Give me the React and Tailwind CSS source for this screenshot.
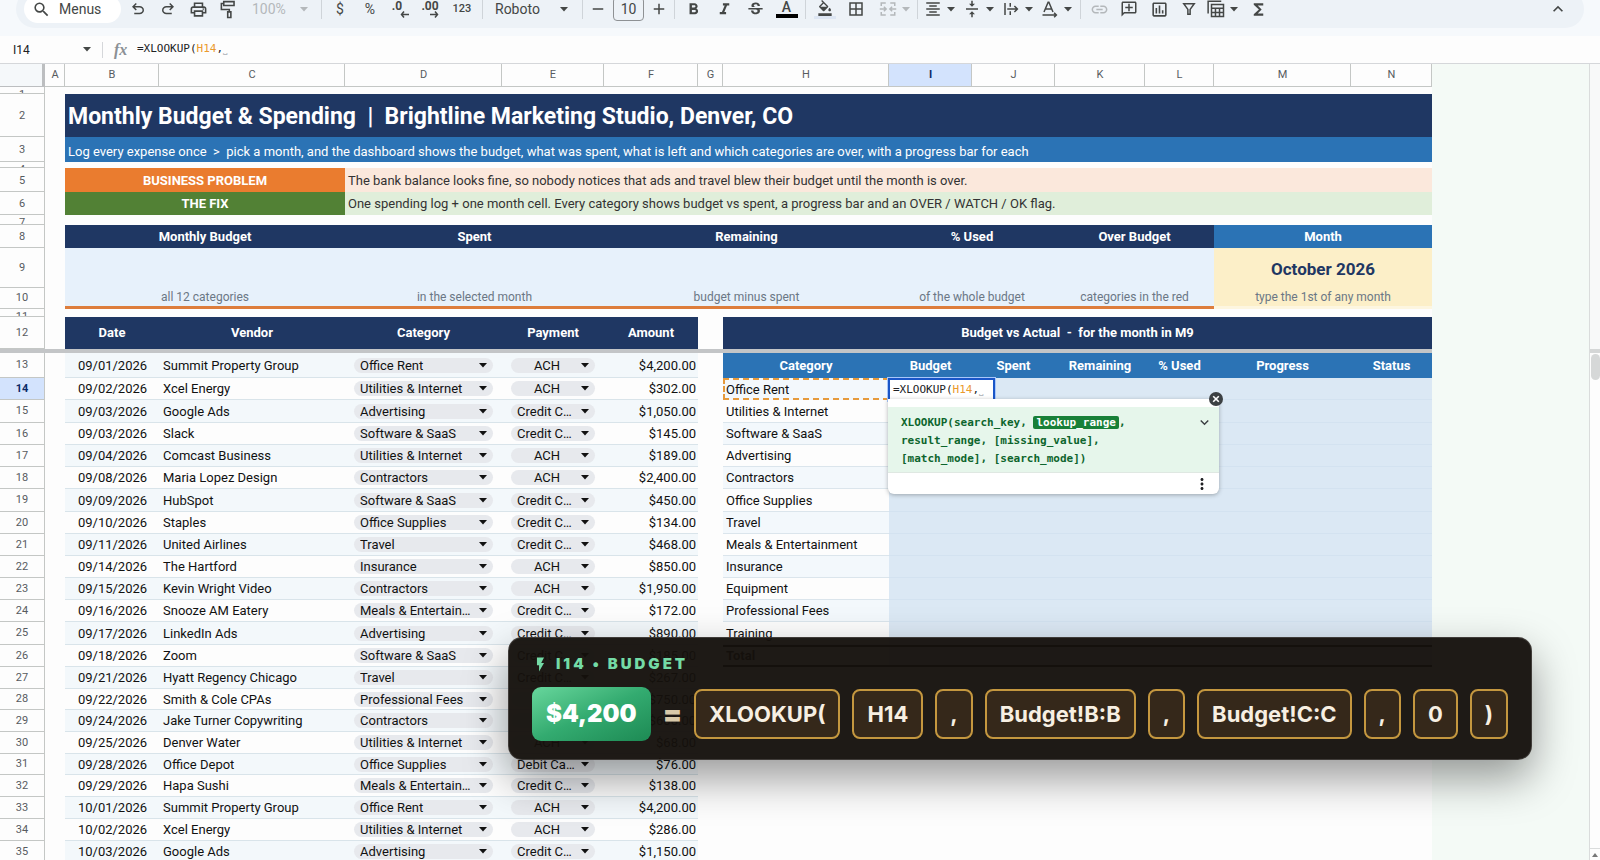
import {
  MdBorderAll,
  MdFlashOn,
  MdFormatAlignCenter,
  MdFormatBold,
  MdFormatColorFill,
  MdFormatItalic,
  MdFunctions,
  MdKeyboardArrowDown,
  MdKeyboardArrowUp,
  MdLink,
  MdMoreVert,
  MdOutlineAddComment,
  MdOutlineInsertChart,
  MdOutlinePrint,
  MdSearch,
  MdStrikethroughS,
  MdVerticalAlignCenter,
} from 'react-icons/md'

const columns = [
  { id: 'A', width: 'w-5' },
  { id: 'B', width: 'w-[94px]' },
  { id: 'C', width: 'w-[186px]' },
  { id: 'D', width: 'w-[157px]' },
  { id: 'E', width: 'w-[102px]' },
  { id: 'F', width: 'w-[94px]' },
  { id: 'G', width: 'w-[25px]' },
  { id: 'H', width: 'w-[166px]' },
  { id: 'I', width: 'w-[83px]' },
  { id: 'J', width: 'w-[83px]' },
  { id: 'K', width: 'w-[90px]' },
  { id: 'L', width: 'w-[69px]' },
  { id: 'M', width: 'w-[137px]' },
  { id: 'N', width: 'w-[81px]' },
]

const expenses = [
  ['09/01/2026', 'Summit Property Group', 'Office Rent', 'ACH', '$4,200.00'],
  ['09/02/2026', 'Xcel Energy', 'Utilities & Internet', 'ACH', '$302.00'],
  ['09/03/2026', 'Google Ads', 'Advertising', 'Credit Card', '$1,050.00'],
  ['09/03/2026', 'Slack', 'Software & SaaS', 'Credit Card', '$145.00'],
  ['09/04/2026', 'Comcast Business', 'Utilities & Internet', 'ACH', '$189.00'],
  ['09/08/2026', 'Maria Lopez Design', 'Contractors', 'ACH', '$2,400.00'],
  ['09/09/2026', 'HubSpot', 'Software & SaaS', 'Credit Card', '$450.00'],
  ['09/10/2026', 'Staples', 'Office Supplies', 'Credit Card', '$134.00'],
  ['09/11/2026', 'United Airlines', 'Travel', 'Credit Card', '$468.00'],
  ['09/14/2026', 'The Hartford', 'Insurance', 'ACH', '$850.00'],
  ['09/15/2026', 'Kevin Wright Video', 'Contractors', 'ACH', '$1,950.00'],
  ['09/16/2026', 'Snooze AM Eatery', 'Meals & Entertainment', 'Credit Card', '$172.00'],
  ['09/17/2026', 'LinkedIn Ads', 'Advertising', 'Credit Card', '$890.00'],
  ['09/18/2026', 'Zoom', 'Software & SaaS', 'Credit Card', '$185.00'],
  ['09/21/2026', 'Hyatt Regency Chicago', 'Travel', 'Credit Card', '$267.00'],
  ['09/22/2026', 'Smith & Cole CPAs', 'Professional Fees', 'ACH', '$750.00'],
  ['09/24/2026', 'Jake Turner Copywriting', 'Contractors', 'ACH', '$600.00'],
  ['09/25/2026', 'Denver Water', 'Utilities & Internet', 'ACH', '$68.00'],
  ['09/28/2026', 'Office Depot', 'Office Supplies', 'Debit Card', '$76.00'],
  ['09/29/2026', 'Hapa Sushi', 'Meals & Entertainment', 'Credit Card', '$138.00'],
  ['10/01/2026', 'Summit Property Group', 'Office Rent', 'ACH', '$4,200.00'],
  ['10/02/2026', 'Xcel Energy', 'Utilities & Internet', 'ACH', '$286.00'],
  ['10/03/2026', 'Google Ads', 'Advertising', 'Credit Card', '$1,150.00'],
]

// rows that were resized by hand, the rest are h-[22px]
const rowHeights = {
  13: 'h-[25px]',
  15: 'h-[23px]',
  19: 'h-[23px]',
  25: 'h-[23px]',
  28: 'h-[21px]',
  31: 'h-[21px]',
}

const categories = [
  'Office Rent',
  'Utilities & Internet',
  'Software & SaaS',
  'Advertising',
  'Contractors',
  'Office Supplies',
  'Travel',
  'Meals & Entertainment',
  'Insurance',
  'Equipment',
  'Professional Fees',
  'Training',
]

const payments = ['ACH', 'Credit Card', 'Debit Card']

const kpis = [
  { label: 'Monthly Budget', note: 'all 12 categories', span: 2 },
  { label: 'Spent', note: 'in the selected month', span: 2 },
  { label: 'Remaining', note: 'budget minus spent', span: 3 },
  { label: '% Used', note: 'of the whole budget', span: 2 },
  { label: 'Over Budget', note: 'categories in the red', span: 2 },
]

const tokens = ['XLOOKUP(', 'H14', ',', 'Budget!B:B', ',', 'Budget!C:C', ',', '0', ')']

function Caret({ className = '' }) {
  return (
    <svg viewBox="0 0 8 5" className={`h-[5px] w-2 shrink-0 fill-current ${className}`} aria-hidden="true">
      <path d="M0 0h8L4 4.6z" />
    </svg>
  )
}

function Icon({ children, viewBox = '0 0 24 24' }) {
  return (
    <svg viewBox={viewBox} className="size-[18px] shrink-0 fill-current" aria-hidden="true">
      {children}
    </svg>
  )
}

function Separator() {
  return <span className="mx-[3px] h-5 w-px shrink-0 bg-[#cfd4d9]" />
}

function Tool({ label, width = 'w-[30px]', className = '', children }) {
  return (
    <button
      type="button"
      aria-label={label}
      className={`flex h-7 shrink-0 items-center justify-center ${width} ${className}`}
    >
      {children}
    </button>
  )
}

function DropTool({ label, className = 'w-[39px] pl-[3px]', children }) {
  return (
    <button type="button" aria-label={label} className={`flex h-7 shrink-0 items-center gap-[5px] ${className}`}>
      {children}
      <Caret />
    </button>
  )
}

function Toolbar() {
  return (
    <header className="h-9 shrink-0 overflow-hidden bg-[#f6f9fc]">
      <div className="mx-4 -mt-2.5 flex h-[38px] items-center rounded-full bg-[#edf2f7] pl-2 text-[#444746]">
        <button
          type="button"
          className="mr-[2px] flex h-7 w-[97px] shrink-0 items-center gap-2 rounded-full bg-white pl-2 text-sm"
        >
          <MdSearch size={19} />
          Menus
        </button>
        <Tool label="Undo">
          <Icon viewBox="0 -960 960 960">
            <path d="M280-200v-80h284q63 0 109.500-40T720-420q0-60-46.500-100T564-560H312l104 104-56 56-200-200 200-200 56 56-104 104h252q97 0 166.500 63T800-420q0 94-69.500 157T564-200H280Z" />
          </Icon>
        </Tool>
        <Tool label="Redo">
          <Icon viewBox="0 -960 960 960">
            <path d="M396-200q-97 0-166.500-63T160-420q0-94 69.500-157T396-640h252L544-744l56-56 200 200-200 200-56-56 104-104H396q-63 0-109.500 40T240-420q0 60 46.500 100T396-280h284v80H396Z" />
          </Icon>
        </Tool>
        <Tool label="Print">
          <MdOutlinePrint size={19} />
        </Tool>
        <Tool label="Paint format">
          <svg viewBox="0 0 24 24" className="size-[19px] fill-none stroke-current stroke-2" aria-hidden="true">
            <path d="M6 2h13v5H6zM6 4.500H3V12h10v3M11 15h4v7h-4z" />
          </svg>
        </Tool>
        <button
          type="button"
          aria-label="Zoom"
          className="flex h-7 w-[75px] shrink-0 items-center justify-between pr-2.5 pl-[9px] text-sm text-[#b4b8bb]"
        >
          100%
          <Caret />
        </button>
        <Separator />
        <Tool label="Format as currency" className="text-sm">$</Tool>
        <Tool label="Format as percent" className="text-sm">%</Tool>
        <Tool label="Decrease decimal places" className="flex-col text-[12px] font-bold">
          <span className="mr-1.5 leading-[10px]">.0</span>
          <svg viewBox="0 0 10 7" className="ml-2.5 h-[7px] w-2.5 fill-none stroke-current stroke-[1.5]" aria-hidden="true">
            <path d="M4 .5 1.500 3.500 4 6.500M1.500 3.500H9" />
          </svg>
        </Tool>
        <Tool label="Increase decimal places" className="flex-col text-[12px] font-bold">
          <span className="leading-[10px]">.00</span>
          <svg viewBox="0 0 10 7" className="ml-2 h-[7px] w-2.5 fill-none stroke-current stroke-[1.5]" aria-hidden="true">
            <path d="M6 .5 8.500 3.500 6 6.500M8.500 3.500H1" />
          </svg>
        </Tool>
        <Tool label="More formats" width="w-[34px]" className="text-[11px] font-medium">123</Tool>
        <Separator />
        <button
          type="button"
          aria-label="Font"
          className="flex h-7 w-[93px] shrink-0 items-center justify-between pr-[11px] pl-[9px] text-sm"
        >
          Roboto
          <Caret />
        </button>
        <Separator />
        <Tool label="Decrease font size" width="w-6">
          <Icon><path d="M5 11h14v2H5z" /></Icon>
        </Tool>
        <input
          aria-label="Font size"
          defaultValue="10"
          className="mx-[3px] h-6 w-[31px] shrink-0 rounded-[4px] border border-[#8e9194] text-center text-sm"
        />
        <Tool label="Increase font size" width="w-6">
          <Icon><path d="M19 13h-6v6h-2v-6H5v-2h6V5h2v6h6z" /></Icon>
        </Tool>
        <Separator />
        <Tool label="Bold" width="w-[31px]"><MdFormatBold size={19} /></Tool>
        <Tool label="Italic" width="w-[31px]"><MdFormatItalic size={19} /></Tool>
        <Tool label="Strikethrough" width="w-[31px]"><MdStrikethroughS size={19} /></Tool>
        <Tool label="Text color" width="w-[31px]" className="flex-col">
          <span className="text-sm leading-[14px] font-medium">A</span>
          <span className="h-1 w-[22px] bg-black" />
        </Tool>
        <Separator />
        <Tool label="Fill color" width="w-[31px]" className="flex-col">
          <MdFormatColorFill size={16} />
          <span className="h-[3px] w-[22px] bg-[#dde6f3]" />
        </Tool>
        <Tool label="Borders" width="w-[31px]"><MdBorderAll size={18} /></Tool>
        <DropTool label="Merge cells" className="w-[43px] pl-2 text-[#b4b8bb]">
          <svg viewBox="0 0 24 24" className="size-[18px] fill-none stroke-current stroke-2" aria-hidden="true">
            <path d="M9 4H3v4M15 4h6v4M3 16v4h6M21 16v4h-6M1 12h8M6.500 9l3 3-3 3M23 12h-8M17.500 9l-3 3 3 3" />
          </svg>
        </DropTool>
        <Separator />
        <DropTool label="Horizontal align"><MdFormatAlignCenter size={18} /></DropTool>
        <DropTool label="Vertical align"><MdVerticalAlignCenter size={18} /></DropTool>
        <DropTool label="Text wrapping">
          <svg viewBox="0 0 24 24" className="size-[18px] fill-none stroke-current stroke-2" aria-hidden="true">
            <path d="M4 4v16M11 4v5M11 15v5M7 12h13M16.500 8l4 4-4 4" />
          </svg>
        </DropTool>
        <DropTool label="Text rotation">
          <svg viewBox="0 0 24 24" className="size-[18px] fill-none stroke-current stroke-2" aria-hidden="true">
            <path d="M4 16 9.500 3h1L16 16M6 12h8M2 20h18M17.500 17l3 3-3 3" />
          </svg>
        </DropTool>
        <Separator />
        <Tool label="Insert link" className="text-[#b4b8bb]"><MdLink size={19} /></Tool>
        <Tool label="Insert comment"><MdOutlineAddComment size={18} className="-scale-x-100" /></Tool>
        <Tool label="Insert chart"><MdOutlineInsertChart size={19} /></Tool>
        <Tool label="Create a filter">
          <svg viewBox="0 0 24 24" className="size-[18px] fill-none stroke-current stroke-2" aria-hidden="true">
            <path d="M5 5h14l-5.500 7.500V19h-3v-6.500z" />
          </svg>
        </Tool>
        <DropTool label="Table views">
          <svg viewBox="0 0 24 24" className="size-[18px] fill-none stroke-current stroke-2" aria-hidden="true">
            <path d="M1.500 18V1.500H19M6 6h16v16H6zM6 11h16M6 16.500h16M11.300 11v11M16.700 11v11" />
          </svg>
        </DropTool>
        <Tool label="Functions"><MdFunctions size={19} /></Tool>
        <Tool label="Hide the menus" className="mr-[11px] ml-auto"><MdKeyboardArrowUp size={20} /></Tool>
      </div>
    </header>
  )
}

function Formula() {
  return (
    <span className="font-['DejaVu_Sans_Mono',monospace] text-[11px] whitespace-pre text-[#202124]">
      =XLOOKUP(<span className="text-[#ea9a2e]">H14</span>,<span className="text-[#b8bcc2]">⎵</span>
    </span>
  )
}

function FormulaBar() {
  return (
    <div className="flex h-7 shrink-0 items-center border-b border-[#d5d7da] bg-[#fdfdfd]">
      <input aria-label="Name box" defaultValue="I14" className="w-16 shrink-0 bg-transparent pl-[13px] text-[12px] text-[#202124]" />
      <button type="button" aria-label="Named ranges" className="ml-[17px] flex h-5 w-[11px] items-center justify-center text-[#444746]">
        <Caret />
      </button>
      <span className="mr-[11px] ml-2.5 h-4 w-px bg-[#d5d7da]" />
      <span className="mr-[7px] w-4 font-['Liberation_Serif',serif] text-base leading-5 font-bold text-[#8b9095] italic">fx</span>
      <Formula />
    </div>
  )
}

function RowLabel({ n, height, active, clipped }) {
  return (
    <th
      scope="row"
      className={`border-r border-b border-[#c4c7c5] p-0 text-[11px] ${
        active ? 'bg-[#d3e3fd] font-bold text-[#0b2a66]' : 'bg-[#fdfdfd] font-normal text-[#575b5f]'
      } ${clipped ? 'align-top' : 'align-middle'} ${height}`}
    >
      <div className={clipped ? `overflow-hidden leading-4 ${clipped}` : 'leading-4'}>{n}</div>
    </th>
  )
}

function Chip({ label, value, options, center }) {
  return (
    <div className="mx-[9px] grid h-[15px] items-center rounded-full bg-[#e7e9ed] pr-1.5">
      <select
        aria-label={label}
        defaultValue={value}
        className={`col-start-1 row-start-1 h-[15px] w-full appearance-none truncate bg-transparent pl-1.5 leading-[15px] ${
          center ? 'pr-3 text-center' : 'pr-4'
        }`}
      >
        {options.map((option) => (
          <option key={option}>{option}</option>
        ))}
      </select>
      <Caret className="pointer-events-none col-start-1 row-start-1 justify-self-end" />
    </div>
  )
}

function FormulaHelp() {
  return (
    <div className="absolute top-[21px] -left-px z-20 w-[331px] rounded-b-md bg-white text-left shadow-[0_1px_4px_rgba(60,64,67,0.4)]">
      <button
        type="button"
        aria-label="Close formula help"
        className="absolute -top-[7px] -right-1 flex size-3.5 items-center justify-center rounded-full bg-[#3c4043] text-white"
      >
        <svg viewBox="0 0 10 10" className="size-2 fill-none stroke-current stroke-2" aria-hidden="true">
          <path d="m1.500 1.500 7 7M8.500 1.500l-7 7" />
        </svg>
      </button>
      <div className="mt-2 flex items-start justify-between bg-[#e6f6eb] pt-[7px] pr-1.5 pb-1 pl-[13px] text-[#0d652d]">
        <p className="w-[250px] font-['DejaVu_Sans_Mono',monospace] text-[11px] leading-[18px] font-bold">
          XLOOKUP(search_key, <mark className="rounded-[2px] bg-[#188038] px-[3px] text-white">lookup_range</mark>,
          <br />
          result_range, [missing_value],
          <br />
          [match_mode], [search_mode])
        </p>
        <button type="button" aria-label="Collapse" className="text-[#3c4043]">
          <MdKeyboardArrowDown size={17} />
        </button>
      </div>
      <div className="flex h-[22px] items-center justify-end border-t border-[#dfe8e2] pr-2">
        <button type="button" aria-label="More options" className="text-[#202124]">
          <MdMoreVert size={18} />
        </button>
      </div>
    </div>
  )
}

function BudgetCells({ row }) {
  if (row === 13) {
    return ['Category', 'Budget', 'Spent', 'Remaining', '% Used', 'Progress', 'Status'].map((name) => (
      <th key={name} scope="col" className="bg-[#2b73b5] p-0 pt-px text-white">{name}</th>
    ))
  }
  if (row === 26) {
    return (
      <>
        <td className="border-y-2 border-black bg-[#f2f7fb] p-0 pl-[3px] font-bold">Total</td>
        <td colSpan={6} className="border-y-2 border-black bg-[#dbe8f4] p-0" />
      </>
    )
  }
  const category = categories[row - 14]
  if (!category) return <td colSpan={7} />

  const selected = row === 14
  return (
    <>
      <td
        className={`p-0 pt-px ${
          selected
            ? 'border-2 border-dashed border-[#e69a3c] pl-px'
            : 'border-b border-[#dbe5ec] pl-[3px]'
        } ${row % 2 ? 'bg-[#fdfdfd]' : 'bg-[#f3f8fc]'}`}
      >
        {category}
      </td>
      {['I', 'J', 'K', 'L', 'M', 'N'].map((id) => (
        <td key={id} className="relative border-b border-[#d3e2f0] bg-[#dbe8f4] p-0">
          {selected && id === 'I' && (
            <>
              <div className="absolute top-0 -left-px z-10 flex h-[23px] w-[107px] items-center border-2 border-[#1a56c8] bg-white pl-[3px] shadow-[0_0_0_1px_#a8c7fa]">
                <Formula />
              </div>
              <FormulaHelp />
            </>
          )}
        </td>
      ))}
    </>
  )
}

function ExpenseRow({ row, expense }) {
  const [date, vendor, category, payment, amount] = expense
  const height = rowHeights[row] || 'h-[22px]'
  const cell = `border-b border-[#d9e4ea] p-0 ${row % 2 ? 'bg-[#f3f8fb]' : 'bg-[#fdfdfd]'}`

  return (
    <tr>
      <RowLabel n={row} height={height} active={row === 14} />
      <td />
      <td className={`${cell} pt-px pl-px text-center`}>{date}</td>
      <td className={`${cell} pt-px pl-1`}>{vendor}</td>
      <td className={cell}>
        <Chip label={`Category, row ${row}`} value={category} options={categories} />
      </td>
      <td className={cell}>
        <Chip label={`Payment, row ${row}`} value={payment} options={payments} center />
      </td>
      <td className={`${cell} pt-px pr-[2px] text-right`}>{amount}</td>
      <td />
      <BudgetCells row={row} />
    </tr>
  )
}

function Sheet() {
  return (
    <table className="w-[1432px] shrink-0 table-fixed border-separate border-spacing-0 self-start bg-[#fdfdfd] text-[13px] leading-4 text-[#111]">
      <colgroup>
        <col className="w-[45px]" />
        {columns.map((column) => (
          <col key={column.id} className={column.width} />
        ))}
      </colgroup>
      <thead>
        <tr>
          <td className="h-[23px] border-r-[3px] border-b border-[#bcbec0] bg-[#f5f8fa] p-0" />
          {columns.map(({ id }) => (
            <th
              key={id}
              scope="col"
              className={`border-r border-b border-[#c4c7c5] p-0 pl-px text-[11px] ${
                id === 'I' ? 'bg-[#d3e3fd] font-bold text-[#0b2a66]' : 'font-normal text-[#575b5f]'
              }`}
            >
              {id}
            </th>
          ))}
        </tr>
      </thead>
      <tbody>
        <tr>
          <RowLabel n={1} height="h-[7px]" clipped="h-1.5" />
          <td colSpan={14} className="p-0" />
        </tr>
        <tr>
          <RowLabel n={2} height="h-[43px] pt-0.5" />
          <td />
          <td colSpan={13} className="bg-[#1f3763] p-0 pt-[3px] pl-[3px] text-[23px] font-bold whitespace-pre text-white">
            {'Monthly Budget & Spending  |  Brightline Marketing Studio, Denver, CO'}
          </td>
        </tr>
        <tr>
          <RowLabel n={3} height="h-[25px] pt-0.5" />
          <td />
          <td colSpan={13} className="bg-[#2b73b5] p-0 pt-1 pl-[3px] whitespace-pre text-white">
            {'Log every expense once  >  pick a month, and the dashboard shows the budget, what was spent, what is left and which categories are over, with a progress bar for each'}
          </td>
        </tr>
        <tr>
          <RowLabel n={4} height="h-1.5" clipped="h-[5px]" />
          <td colSpan={14} className="p-0" />
        </tr>
        <tr>
          <RowLabel n={5} height="h-6 pt-0.5" />
          <td />
          <th colSpan={2} className="bg-[#ea7c2f] p-0 pt-0.5 text-white">BUSINESS PROBLEM</th>
          <td colSpan={11} className="bg-[#fbe8dc] p-0 pt-0.5 pl-[3px] text-[#333]">
            The bank balance looks fine, so nobody notices that ads and travel blew their budget until the month is over.
          </td>
        </tr>
        <tr>
          <RowLabel n={6} height="h-[23px] pt-px" />
          <td />
          <th colSpan={2} className="bg-[#528135] p-0 pt-px text-white">THE FIX</th>
          <td colSpan={11} className="bg-[#e0eeda] p-0 pt-px pl-[3px] text-[#333]">
            One spending log + one month cell. Every category shows budget vs spent, a progress bar and an OVER / WATCH / OK flag.
          </td>
        </tr>
        <tr>
          <RowLabel n={7} height="h-2.5" clipped="h-[9px]" />
          <td colSpan={14} className="p-0" />
        </tr>
        <tr>
          <RowLabel n={8} height="h-[23px] pt-px" />
          <td />
          {kpis.map(({ label, span }) => (
            <th key={label} scope="col" colSpan={span} className="bg-[#1f3763] p-0 pt-px text-white">{label}</th>
          ))}
          <th colSpan={2} scope="col" className="bg-[#2b73b5] p-0 pt-px text-white">Month</th>
        </tr>
        <tr>
          <RowLabel n={9} height="h-10" />
          <td />
          {kpis.map(({ label, span }) => (
            <td key={label} colSpan={span} className="bg-[#e7f1fb] p-0" />
          ))}
          <td colSpan={2} className="bg-[#fcefc8] p-0 pt-px text-center text-[17px] leading-5 font-bold text-[#1f3763]">
            October 2026
          </td>
        </tr>
        <tr>
          <RowLabel n={10} height="h-[21px]" />
          <td />
          {kpis.map(({ label, note, span }) => (
            <td key={label} colSpan={span} className="border-b-[3px] border-[#dd7d3c] bg-[#e7f1fb] p-0 text-center text-[12px] text-[#6b7785]">
              {note}
            </td>
          ))}
          <td colSpan={2} className="border-b-[3px] border-[#fdf6e0] bg-[#fcefc8] p-0 text-center text-[12px] text-[#6b7785]">
            type the 1st of any month
          </td>
        </tr>
        <tr>
          <RowLabel n={11} height="h-2" clipped="h-[7px]" />
          <td colSpan={14} className="p-0" />
        </tr>
        <tr>
          <RowLabel n={12} height="h-8" />
          <td />
          {['Date', 'Vendor', 'Category', 'Payment', 'Amount'].map((name) => (
            <th key={name} scope="col" className="bg-[#1f3763] p-0 text-white">{name}</th>
          ))}
          <td />
          <th colSpan={7} className="bg-[#1f3763] p-0 whitespace-pre text-white">
            {'Budget vs Actual  -  for the month in M9'}
          </th>
        </tr>
        <tr>
          <td colSpan={15} className="h-1 bg-[#c3c5c7] p-0" />
        </tr>
        {expenses.map((expense, i) => (
          <ExpenseRow key={i} row={i + 13} expense={expense} />
        ))}
      </tbody>
    </table>
  )
}

function ScrollRail() {
  return (
    <div className="flex w-[11px] shrink-0 flex-col border-l border-[#dadcdc] bg-[#fdfdfd]">
      <div className="h-[285px] bg-[#f8f9f9]" />
      <div className="h-1 bg-[#d5d7d7]" />
      <div className="mt-px ml-px h-[26px] rounded-full bg-[#d6d8d8]" />
      <div className="mt-auto flex h-3 items-center justify-center border-t border-[#dadcdc] text-[#777]">
        <svg viewBox="0 0 6 4" className="h-1 w-1.5 fill-current" aria-hidden="true">
          <path d="M3 0 6 4H0z" />
        </svg>
      </div>
    </div>
  )
}

function FormulaCallout() {
  return (
    <section className="absolute top-[637px] left-[508px] z-30 rounded-[14px] border border-white/15 bg-[#15110d]/96 px-[23px] pt-4 pb-[18px] font-[Inter,sans-serif] shadow-[0_18px_44px_rgba(0,0,0,0.4)]">
      <h2 className="flex items-center gap-[7px] text-[15px] leading-5 font-black tracking-[3px] text-[#74dba6]">
        <MdFlashOn size={17} />
        I14 • BUDGET
      </h2>
      <div className="mt-[13px] flex items-center gap-3">
        <output className="flex h-[54px] items-center rounded-[9px] bg-linear-to-br from-[#67d79d] via-[#33ab70] to-[#1d8a54] px-3.5 text-2xl font-black text-white">
          $4,200
        </output>
        <span className="text-[28px] font-black text-[#d8c9a9]">=</span>
        {tokens.map((token, i) => (
          <span
            key={i}
            className="flex h-[50px] items-center rounded-lg border-2 border-[#c4973f] bg-[#35281a] px-[13px] text-[22px] font-bold text-[#f7efe2]"
          >
            {token}
          </span>
        ))}
      </div>
    </section>
  )
}

export default function App() {
  return (
    <div className="relative flex h-screen flex-col overflow-hidden bg-[#f4faf6] font-[Roboto,sans-serif]">
      <Toolbar />
      <FormulaBar />
      <main className="flex min-h-0 flex-1">
        <div className="flex min-w-0 flex-1 overflow-hidden">
          <Sheet />
        </div>
        <ScrollRail />
      </main>
      <FormulaCallout />
    </div>
  )
}
